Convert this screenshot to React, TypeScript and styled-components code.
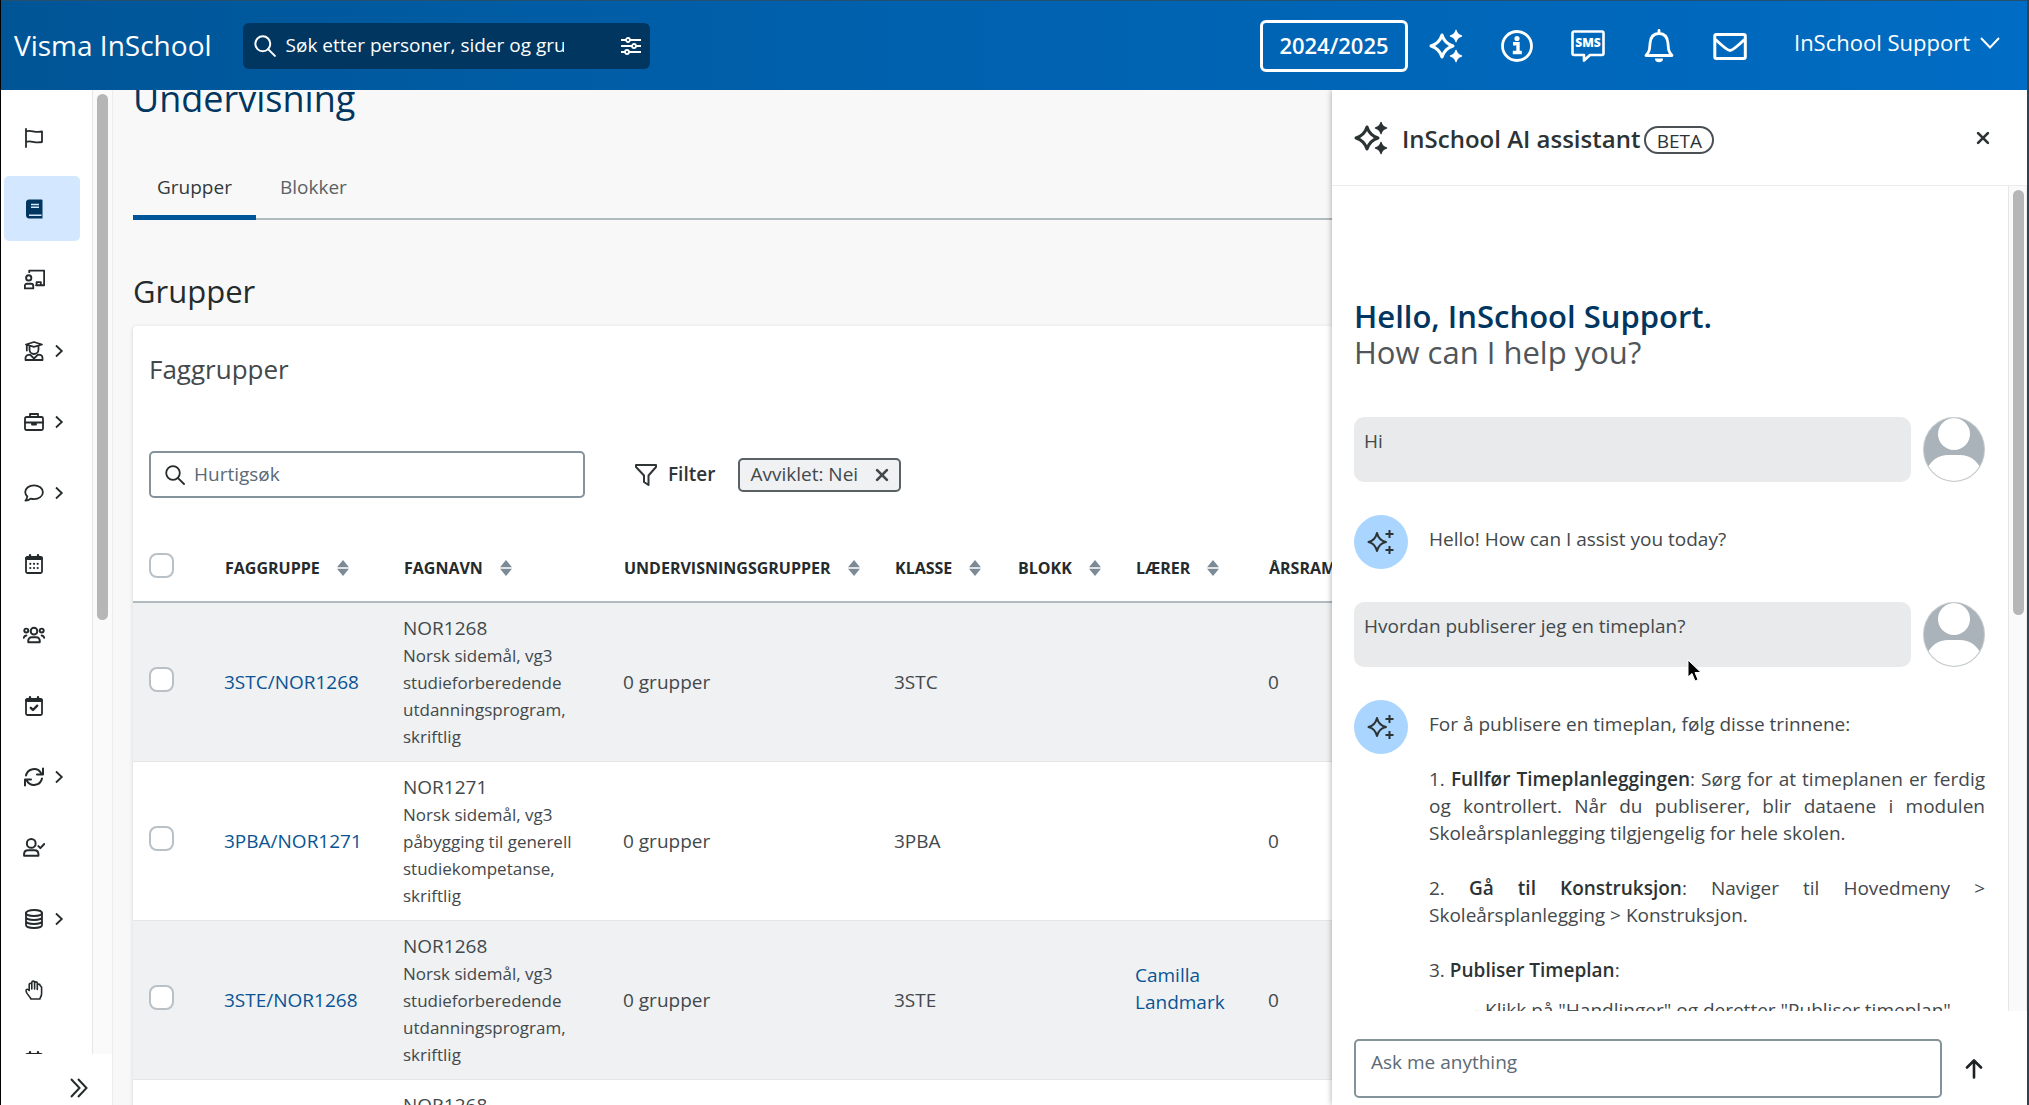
import React from "react";
import styled, { createGlobalStyle, css } from "styled-components";

const font = `"Open Sans", "Noto Sans", "Liberation Sans", sans-serif`;

const color = {
  navy: "#003660",
  blue: "#00559a",
  link: "#0a5494",
  ink: "#252a2c",
  text: "#43484b",
  muted: "#5b6a76",
  border: "#84929b",
  line: "#b0babf",
  hair: "#e4e6e8",
  page: "#f8f8f8",
  stripe: "#eff1f3",
};

const Global = createGlobalStyle`
  *, *::before, *::after { box-sizing: border-box; }
  body { margin: 0; background: #fff; color: ${color.text}; font: 400 19px/27px ${font}; }
  button, input, textarea { font: inherit; color: inherit; }
  button { background: none; border: 0; padding: 0; cursor: pointer; }
  svg { display: block; flex: none; }
  h1, h2, h3, p { margin: 0; font-weight: 400; }
  a { color: ${color.link}; text-decoration: none; }
`;

/* ---------- page frame ---------- */

const Shell = styled.div`
  display: flex;
  flex-direction: column;
  height: 100vh;
  overflow: hidden;
  border-left: 1px solid #000;
  border-right: 2px solid #2b4357;
`;

const Body = styled.div`
  flex: 1;
  min-height: 0;
  display: flex;
`;

/* ---------- top bar ---------- */

const TopBar = styled.header`
  display: flex;
  align-items: center;
  height: 90px;
  padding: 0 27px 0 13px;
  border-top: 1px solid #24506f;
  background: linear-gradient(90deg, #005596 0%, #0061ae 45%, #006cc3 100%);
  color: #fff;
`;

const Brand = styled.div`
  padding-bottom: 2px;
  font-size: 28px;
  line-height: 36px;
  white-space: nowrap;
`;

const GlobalSearch = styled.label`
  display: flex;
  align-items: center;
  width: 407px;
  height: 46px;
  margin-left: 31px;
  padding: 0 9px 0 11px;
  border-radius: 6px;
  background: ${color.navy};
`;

const GlobalSearchInput = styled.input`
  width: 278px;
  margin-left: 10px;
  margin-right: auto;
  padding: 0;
  border: 0;
  outline: 0;
  background: transparent;
  &::placeholder { color: #fff; opacity: 1; }
`;

const TopActions = styled.div`
  display: flex;
  align-items: center;
  margin-left: auto;
`;

const YearButton = styled.button`
  width: 148px;
  height: 52px;
  margin-right: 3px;
  border: 3px solid #fff;
  border-radius: 6px;
  font-size: 22px;
  font-weight: 600;
`;

const TopIconButton = styled.button`
  display: grid;
  place-items: center;
  width: 71px;
  height: 52px;
`;

const AccountButton = styled.button`
  display: flex;
  align-items: center;
  gap: 10px;
  margin-left: 28px;
  padding-bottom: 6px;
  font-size: 22px;
  white-space: nowrap;
`;

/* ---------- scroll bars ---------- */

const Track = styled.div<{ $width: number }>`
  flex: none;
  width: ${(p) => p.$width}px;
  padding: 4px 3px 4px 4px;
  border-left: 1px solid #e6e6e6;
  border-right: 1px solid #ececec;
  background: #fafafa;
`;

const Thumb = styled.div<{ $share: number }>`
  height: ${(p) => p.$share}%;
  width: 11px;
  border-radius: 6px;
  background: #b6b6b6;
`;

/* ---------- side menu ---------- */

const Side = styled.aside`
  flex: none;
  display: flex;
  flex-direction: column;
  width: 112px;
  background: #fff;
`;

const SideScroll = styled.div`
  flex: 1;
  min-height: 0;
  display: flex;
  overflow: hidden;
`;

const Menu = styled.nav`
  flex: 1;
  display: flex;
  flex-direction: column;
  gap: 6px;
  padding: 15px 12px 0 3px;
`;

const MenuItem = styled.button<{ $active?: boolean }>`
  flex: none;
  display: flex;
  align-items: center;
  gap: 7px;
  height: 65px;
  padding-left: 18px;
  border-radius: 5px;
  color: ${(p) => (p.$active ? color.navy : color.ink)};
  background: ${(p) => (p.$active ? "#d3e8ff" : "transparent")};
`;

const MenuIcon = styled.span`
  display: grid;
  place-items: center;
  width: 24px;
`;

const SideFooter = styled.div`
  flex: none;
  display: flex;
  justify-content: flex-end;
  align-items: center;
  height: 51px;
  padding: 16px 24px 0 0;
  border-right: 1px solid #ececec;
  color: ${color.ink};
`;

/* ---------- main ---------- */

const Main = styled.main`
  flex: 1;
  min-width: 0;
  overflow: hidden;
  padding-left: 20px;
  background: ${color.page};
`;

const PageTitle = styled.h1`
  margin-top: -15px;
  font-size: 36px;
  line-height: 48px;
  color: ${color.navy};
`;

const Tabs = styled.div`
  display: flex;
  margin-top: 31px;
  box-shadow: inset 0 -2px 0 ${color.line};
`;

const Tab = styled.button<{ $active?: boolean }>`
  height: 66px;
  padding: 0 24px;
  color: ${(p) => (p.$active ? "#33383b" : "#5c6165")};
  ${(p) => p.$active && css`box-shadow: inset 0 -5px 0 ${color.blue};`}
`;

const SectionTitle = styled.h2`
  margin: 51px 0 15px;
  font-size: 31px;
  line-height: 40px;
  color: ${color.ink};
`;

const Card = styled.section`
  overflow: hidden;
  padding-top: 26px;
  border-radius: 4px 0 0 0;
  background: #fff;
  box-shadow: 0 1px 4px rgba(0, 0, 0, 0.15);
`;

const CardTitle = styled.h3`
  padding-left: 16px;
  font-size: 26px;
  line-height: 34px;
`;

const Toolbar = styled.div`
  display: flex;
  align-items: center;
  margin: 65px 0 32px;
  padding-left: 16px;
`;

const QuickSearch = styled.label`
  display: flex;
  align-items: center;
  gap: 9px;
  width: 436px;
  height: 47px;
  padding: 0 14px;
  border: 2px solid ${color.border};
  border-radius: 5px;
  background: #fff;
  color: ${color.ink};
`;

const QuickSearchInput = styled.input`
  flex: 1;
  min-width: 0;
  padding: 0;
  border: 0;
  outline: 0;
  &::placeholder { color: ${color.muted}; opacity: 1; }
`;

const FilterButton = styled.button`
  display: flex;
  align-items: center;
  gap: 10px;
  margin-left: 49px;
  font-weight: 600;
  color: #303538;
`;

const Chip = styled.div`
  display: flex;
  align-items: center;
  gap: 17px;
  height: 34px;
  margin-left: 23px;
  padding: 0 10px;
  border: 2px solid #5a6165;
  border-radius: 5px;
  background: ${color.stripe};
  white-space: nowrap;
`;

const Table = styled.table`
  width: 1334px;
  table-layout: fixed;
  border-collapse: separate;
  border-spacing: 0;
  text-align: left;
`;

const Column = styled.col<{ $width: number }>`
  width: ${(p) => p.$width}px;
`;

const HeadCell = styled.th`
  height: 73px;
  padding: 5px 0 0 2px;
  border-bottom: 2px solid ${color.line};
  font-size: 16px;
  font-weight: 700;
  color: ${color.ink};
  white-space: nowrap;
`;

const HeadCheck = styled(HeadCell)`
  padding: 0 0 0 16px;
`;

const SortButton = styled.button`
  display: flex;
  align-items: center;
  gap: 17px;
`;

const Row = styled.tr`
  &:nth-child(odd) { background: ${color.stripe}; }
`;

const Cell = styled.td`
  padding: 11px 0 11px 1px;
  border-bottom: 1px solid ${color.hair};
`;

const CheckCell = styled(Cell)`
  padding: 0 0 6px 16px;
`;

const TeacherCell = styled(Cell)`
  padding-bottom: 33px;
`;

const Subject = styled.div`
  width: 180px;
  font-size: 17px;
`;

const SubjectCode = styled.div`
  font-size: 19px;
  line-height: 28px;
`;

const Checkbox = styled.input`
  appearance: none;
  display: block;
  width: 25px;
  height: 25px;
  margin: 0;
  border: 2px solid #b9c1c6;
  border-radius: 8px;
  background: #fff;
`;

/* ---------- assistant panel ---------- */

const Panel = styled.aside`
  position: relative;
  flex: none;
  display: flex;
  flex-direction: column;
  width: 695px;
  background: #fff;
  box-shadow: 0 0 6px rgba(0, 0, 0, 0.35);
  clip-path: inset(0 0 0 -12px);
`;

const PanelHeader = styled.div`
  flex: none;
  display: flex;
  align-items: center;
  height: 96px;
  padding: 0 37px 0 22px;
  border-bottom: 1px solid #ebebeb;
  color: #2c3335;
`;

const PanelTitle = styled.h2`
  margin-left: 14px;
  padding-top: 2px;
  font-size: 24px;
  line-height: 32px;
  font-weight: 600;
`;

const Beta = styled.span`
  display: grid;
  place-items: center;
  width: 70px;
  height: 28px;
  margin: 4px 0 0 4px;
  border: 2px solid #4a5053;
  border-radius: 14px;
`;

const CloseButton = styled.button`
  margin-left: auto;
`;

const PanelScroll = styled.div`
  flex: 1;
  min-height: 0;
  display: flex;
  overflow: hidden;
`;

const Conversation = styled.div`
  flex: 1;
  min-width: 0;
  padding: 112px 23px 0 22px;
`;

const Greeting = styled.div`
  font-size: 31px;
  line-height: 36px;
  color: #4f5558;
  margin-bottom: 47px;
`;

const GreetingName = styled.p`
  font-weight: 600;
  color: ${color.navy};
`;

const Messages = styled.div`
  display: flex;
  flex-direction: column;
  gap: 33px;
`;

const UserMessage = styled.div`
  display: flex;
  gap: 12px;
`;

const Bubble = styled.p`
  flex: 1;
  min-height: 65px;
  padding: 11px 10px;
  border-radius: 10px;
  background: #e8eaec;
`;

const BotMessage = styled.div`
  display: flex;
  gap: 21px;
`;

const BotBadge = styled.div`
  flex: none;
  display: grid;
  place-items: center;
  width: 54px;
  height: 54px;
  border-radius: 50%;
  background: #a9d5ff;
  color: #2c3335;
`;

const BotText = styled.div`
  flex: 1;
  display: flex;
  flex-direction: column;
  gap: 28px;
  padding-top: 11px;
  text-align: justify;
  b { font-weight: 600; color: #2c3335; }
`;

const SubStep = styled.p`
  margin-top: -15px;
  padding-left: 45px;
`;

const Composer = styled.form`
  flex: none;
  display: flex;
  padding: 28px 43px 7px 22px;
`;

const ComposerInput = styled.textarea`
  flex: 1;
  height: 59px;
  padding: 8px 15px;
  border: 2px solid ${color.border};
  border-radius: 5px;
  outline: 0;
  resize: none;
  overflow: hidden;
  &::placeholder { color: ${color.muted}; opacity: 1; }
`;

const SendButton = styled.button`
  margin-left: 22px;
  color: #1d2224;
`;

const Pointer = styled.svg`
  position: absolute;
  left: 355px;
  top: 569px;
`;

/* ---------- icons ---------- */

type IconProps = { size?: number; w?: number; children: React.ReactNode };

const Icon = ({ size = 20, w = 1.8, children }: IconProps) => (
  <svg width={size} height={size} viewBox="0 0 20 20" fill="none" stroke="currentColor" strokeWidth={w} strokeLinecap="round" strokeLinejoin="round" aria-hidden="true">
    {children}
  </svg>
);

const SearchIcon = ({ size = 22 }: { size?: number }) => (
  <Icon size={size} w={1.8}><circle cx="8" cy="8" r="6.8" /><path d="M12.800 12.800 19 19" /></Icon>
);

const CrossIcon = ({ size = 14 }: { size?: number }) => (
  <Icon size={size} w={3.8}><path d="M3 3l14 14M17 3 3 17" /></Icon>
);

const Sparkles = ({ size = 34 }: { size?: number }) => (
  <svg width={size} height={size} viewBox="0 0 34 34" fill="none" stroke="currentColor" strokeLinejoin="round" aria-hidden="true">
    <path strokeWidth="3" d="M13 6 Q15.600 14.400 24 17 Q15.600 19.600 13 28 Q10.400 19.600 2 17 Q10.400 14.400 13 6Z" />
    <path fill="currentColor" strokeWidth="1.400" d="M27 1.500 Q28 6 32.500 7 Q28 8 27 12.500 Q26 8 21.500 7 Q26 6 27 1.500Z M27 21.500 Q28 26 32.500 27 Q28 28 27 32.500 Q26 28 21.500 27 Q26 26 27 21.500Z" />
  </svg>
);

const BotIcon = () => (
  <svg width="28" height="28" viewBox="0 0 28 28" fill="none" stroke="currentColor" strokeWidth="2" strokeLinejoin="round" aria-hidden="true">
    <path d="M10 5 Q11.700 12.300 19 14 Q11.700 15.700 10 23 Q8.300 15.700 1.500 14 Q8.300 12.300 10 5Z" />
    <path d="M22.500 2v8M18.500 6h8M22.500 18v8M18.500 22h8" />
  </svg>
);

const Chevron = () => (
  <svg width="12" height="14" viewBox="0 0 12 14" fill="none" stroke="currentColor" strokeWidth="1.800" aria-hidden="true">
    <path d="M3 1.500 8.800 7 3 12.500" />
  </svg>
);

const SortIcon = () => (
  <svg width="12" height="16" viewBox="0 0 12 16" fill="#7b8a95" aria-hidden="true">
    <path d="M6 0 12 7.200H0ZM6 16 0 8.800h12Z" />
  </svg>
);

const Avatar = () => (
  <svg width="62" height="65" viewBox="0 0 62 65" role="img" aria-label="InSchool Support">
    <clipPath id="face"><ellipse cx="31" cy="32.500" rx="30" ry="31.500" /></clipPath>
    <ellipse cx="31" cy="32.500" rx="31" ry="32.500" fill="#c4cacd" />
    <g clipPath="url(#face)">
      <rect width="62" height="65" fill="#a9b3b9" />
      <ellipse cx="31" cy="17" rx="16" ry="16" fill="#fff" />
      <path d="M4 52 Q11 38 25 38H37Q51 38 58 52V65H4Z" fill="#fff" />
    </g>
  </svg>
);

const FlagIcon = () => <Icon><path d="M2 1v18M2 3.500c5-2.400 8 1.800 16 0v10.500c-8 1.800-11-2.400-16 0" /></Icon>;
const BookIcon = () => (
  <svg width="20" height="20" viewBox="0 0 20 20" aria-hidden="true">
    <path fill="currentColor" d="M5 .5h12.500a1 1 0 0 1 1 1V19.500H5A3.300 3.300 0 0 1 2 16.300V3.700A3.200 3.200 0 0 1 5 .5Z" />
    <path stroke="#d3e8ff" strokeWidth="1.400" d="M7 5.500h8M7 8.300h8M5 16.300h12.500" />
  </svg>
);
const TeacherIcon = () => (
  <Icon size={21}><circle cx="4.500" cy="8.500" r="2.500" /><path d="M.8 18.500v-2.500a2 2 0 0 1 2-2h4a2 2 0 0 1 2 2v2.500ZM5 3V1.500h14.200v14H11.500M12 15.500v-3h4v3" /></Icon>
);
const StudentIcon = () => (
  <Icon><path d="M2 3.500 10 1l8 2.500-8 2.300ZM2.800 4v5.500M5.500 5v3.500a4.500 4.500 0 0 0 9 0V5M1.500 19v-2c0-2 2-3.300 4.500-3.300L10 17.500l4-3.800c2.500 0 4.500 1.300 4.500 3.300v2Z" /></Icon>
);
const CaseIcon = () => (
  <Icon><rect x="1" y="5" width="18" height="13" rx="1.500" /><path d="M6 5V2h8v3M1 10.500h18M8 10.500v2h4v-2" /></Icon>
);
const ChatIcon = () => (
  <Icon><path d="M3.300 13.500A6.500 6.500 0 0 1 1.200 9.200C1.200 5.300 5.200 2.300 10 2.300s8.900 3 8.900 6.900-4 6.900-8.900 6.900c-1.200 0-2.400-.2-3.400-.5-1.300 1.300-3 2-5.200 2 .9-1 1.700-2.300 1.900-4.100Z" /></Icon>
);
const CalendarIcon = () => (
  <Icon><rect x="2" y="3" width="16" height="16" rx="1.500" /><path strokeWidth="3.400" d="M2.800 4.300h14.400" /><path strokeWidth="2.400" d="M6 1.200v2M14 1.200v2" /><path strokeWidth="2.200" d="M6.300 9.800h.01M10 9.800h.01M13.700 9.800h.01M6.300 14h.01M10 14h.01M13.700 14h.01" /></Icon>
);
const UsersIcon = () => (
  <Icon size={22}><circle cx="10" cy="6.500" r="3" /><circle cx="3" cy="6" r="1.800" /><circle cx="17" cy="6" r="1.800" /><path d="M4.800 16.500V15a3 3 0 0 1 3-3h4.400a3 3 0 0 1 3 3v1.500ZM.7 12.500a3 3 0 0 1 2.300-2M19.300 12.500a3 3 0 0 0-2.300-2" /></Icon>
);
const CalendarCheckIcon = () => (
  <Icon><rect x="2" y="3" width="16" height="16" rx="1.500" /><path strokeWidth="3.400" d="M2.800 4.300h14.400" /><path strokeWidth="2.400" d="M6 1.200v2M14 1.200v2M6.800 11.800l2.200 2.200 4.200-4.300" /></Icon>
);
const SyncIcon = () => (
  <Icon w={2}><path d="M2 8.500A8.200 8.200 0 0 1 17 6M19 1.500V7.500H13M18 11.500A8.200 8.200 0 0 1 3 14M1 18.500V12.500H7" /></Icon>
);
const UserCheckIcon = () => (
  <Icon size={22}><circle cx="7.500" cy="5.800" r="4" /><path d="M1 17v-1.800A3.500 3.500 0 0 1 4.500 12h6a3.500 3.500 0 0 1 3.500 3.200V17ZM14 8.300l1.800 1.800 3.500-3.700" /></Icon>
);
const DatabaseIcon = () => (
  <Icon><ellipse cx="10" cy="4" rx="8" ry="3" /><path d="M2 4v12c0 1.700 3.600 3 8 3s8-1.300 8-3V4M2 8c0 1.700 3.600 3 8 3s8-1.300 8-3M2 12c0 1.700 3.600 3 8 3s8-1.300 8-3" /></Icon>
);
const HandIcon = () => (
  <Icon w={1.6}><path d="M5.200 10.500V4.500a1.300 1.300 0 0 1 2.600 0V9V2.500a1.400 1.400 0 0 1 2.800 0V9V3.200a1.300 1.300 0 0 1 2.700 0V9.500V5.500a1.400 1.400 0 0 1 2.800 0l1.500 1.800v6.200c0 3.300-1.600 3.500-1.600 5.500H6.800C6.800 17 2.200 14.500 2 10.800c0-1.800 1.700-2.200 3.200-.3Z" /></Icon>
);

const FunnelIcon = () => (
  <svg width="24" height="24" viewBox="0 0 24 24" fill="none" stroke="currentColor" strokeWidth="2" strokeLinejoin="round" aria-hidden="true">
    <path d="M2 2h20v2L14.500 12.500v9.500L10 19v-6.500L2 4Z" />
  </svg>
);

const SlidersIcon = () => (
  <svg width="20" height="20" viewBox="0 0 20 20" fill={color.navy} stroke="#fff" strokeWidth="1.800" aria-hidden="true">
    <path d="M0 4h20M0 10h20M0 16h20" />
    <circle cx="7" cy="4" r="2" /><circle cx="13" cy="10" r="2" /><circle cx="6" cy="16" r="2" />
  </svg>
);

const InfoIcon = () => (
  <svg width="34" height="34" viewBox="0 0 34 34" fill="none" stroke="#fff" strokeWidth="2.800" aria-hidden="true">
    <circle cx="17" cy="17" r="14.500" />
    <path d="M13 14.800h5v8.500M12.800 23.500h9" strokeWidth="3.400" />
    <circle cx="17" cy="9.500" r="2.600" fill="#fff" stroke="none" />
  </svg>
);

const SmsLetters = styled.text`
  font: 800 12px ${font};
  fill: #fff;
  text-anchor: middle;
`;

const SmsIcon = () => (
  <svg width="34" height="34" viewBox="0 0 34 34" aria-hidden="true">
    <path fill="none" stroke="#fff" strokeWidth="2.600" strokeLinejoin="round" d="M3 2.500h28a1.500 1.500 0 0 1 1.500 1.500v20.500a1.500 1.500 0 0 1-1.500 1.500H19l-6 5.500V26H3A1.500 1.500 0 0 1 1.500 24.500V4A1.500 1.500 0 0 1 3 2.500Z" />
    <SmsLetters x="17" y="18">SMS</SmsLetters>
  </svg>
);

const BellIcon = () => (
  <svg width="34" height="34" viewBox="0 0 34 34" fill="none" stroke="#fff" strokeWidth="2.800" strokeLinejoin="round" aria-hidden="true">
    <path d="M4 26.500C8 22 7.500 20 8 14.500 8.500 8 12 4.500 17 4.500S25.500 8 26 14.500C26.500 20 26 22 30 26.500Z" />
    <path d="M17 1.500v3" strokeLinecap="round" />
    <path d="M13 29.500h8a4 3.800 0 0 1-8 0Z" fill="#fff" stroke="none" />
  </svg>
);

const MailIcon = () => (
  <svg width="34" height="34" viewBox="0 0 34 34" fill="none" stroke="#fff" strokeWidth="3" strokeLinejoin="round" aria-hidden="true">
    <rect x="1.800" y="5.500" width="30.500" height="24" rx="1.500" />
    <path d="M2.500 10.500 Q14 21.500 17 21.500T31.500 10.500" />
  </svg>
);

/* ---------- data ---------- */

const menu: { label: string; icon: React.ReactNode; more?: boolean; active?: boolean }[] = [
  { label: "Start", icon: <FlagIcon /> },
  { label: "Undervisning", icon: <BookIcon />, active: true },
  { label: "Klasser", icon: <TeacherIcon /> },
  { label: "Elever", icon: <StudentIcon />, more: true },
  { label: "Ansatte", icon: <CaseIcon />, more: true },
  { label: "Meldinger", icon: <ChatIcon />, more: true },
  { label: "Kalender", icon: <CalendarIcon /> },
  { label: "Kontakter", icon: <UsersIcon /> },
  { label: "Prøver", icon: <CalendarCheckIcon /> },
  { label: "Synkronisering", icon: <SyncIcon />, more: true },
  { label: "Tilstede", icon: <UserCheckIcon /> },
  { label: "Data", icon: <DatabaseIcon />, more: true },
  { label: "Fravær", icon: <HandIcon /> },
  { label: "Planer", icon: <CalendarIcon /> },
];

const columnWidths = [90, 179, 220, 271, 123, 118, 133, 200];
const headings = ["FAGGRUPPE", "FAGNAVN", "UNDERVISNINGSGRUPPER", "KLASSE", "BLOKK", "LÆRER", "ÅRSRAMME"];

const groups = [
  { group: "3STC/NOR1268", code: "NOR1268", name: "Norsk sidemål, vg3 studieforberedende utdanningsprogram, skriftlig", klass: "3STC", teacher: "" },
  { group: "3PBA/NOR1271", code: "NOR1271", name: "Norsk sidemål, vg3 påbygging til generell studiekompetanse, skriftlig", klass: "3PBA", teacher: "" },
  { group: "3STE/NOR1268", code: "NOR1268", name: "Norsk sidemål, vg3 studieforberedende utdanningsprogram, skriftlig", klass: "3STE", teacher: "Camilla Landmark" },
  { group: "3STD/NOR1268", code: "NOR1268", name: "Norsk sidemål, vg3 studieforberedende utdanningsprogram, skriftlig", klass: "3STD", teacher: "" },
];

/* ---------- views ---------- */

const Header = () => (
  <TopBar>
    <Brand>Visma InSchool</Brand>
    <GlobalSearch>
      <SearchIcon />
      <GlobalSearchInput aria-label="Søk" placeholder="Søk etter personer, sider og grupper" />
      <SlidersIcon />
    </GlobalSearch>
    <TopActions>
      <YearButton>2024/2025</YearButton>
      <TopIconButton aria-label="AI assistant"><Sparkles /></TopIconButton>
      <TopIconButton aria-label="Info"><InfoIcon /></TopIconButton>
      <TopIconButton aria-label="Tekstmelding"><SmsIcon /></TopIconButton>
      <TopIconButton aria-label="Varsler"><BellIcon /></TopIconButton>
      <TopIconButton aria-label="Meldinger"><MailIcon /></TopIconButton>
      <AccountButton>
        InSchool Support
        <svg width="20" height="12" viewBox="0 0 20 12" fill="none" stroke="#fff" strokeWidth="2" aria-hidden="true"><path d="M1 1l9 9.500L19 1" /></svg>
      </AccountButton>
    </TopActions>
  </TopBar>
);

const SideMenu = () => (
  <Side>
    <SideScroll>
      <Menu aria-label="Hovedmeny">
        {menu.map((m) => (
          <MenuItem key={m.label} $active={m.active} aria-label={m.label}>
            <MenuIcon>{m.icon}</MenuIcon>
            {m.more && <Chevron />}
          </MenuItem>
        ))}
      </Menu>
      <Track $width={21}><Thumb $share={55} /></Track>
    </SideScroll>
    <SideFooter>
      <button aria-label="Utvid meny">
        <svg width="18" height="20" viewBox="0 0 18 20" fill="none" stroke="currentColor" strokeWidth="2" aria-hidden="true"><path d="M1 1l8.500 9L1 19M8 1l8.500 9L8 19" /></svg>
      </button>
    </SideFooter>
  </Side>
);

const GroupTable = () => (
  <Table>
    <colgroup>{columnWidths.map((w, i) => <Column key={i} $width={w} />)}</colgroup>
    <thead>
      <tr>
        <HeadCheck><Checkbox type="checkbox" aria-label="Velg alle" /></HeadCheck>
        {headings.map((h) => (
          <HeadCell key={h}><SortButton>{h}<SortIcon /></SortButton></HeadCell>
        ))}
      </tr>
    </thead>
    <tbody>
      {groups.map((g) => (
        <Row key={g.group}>
          <CheckCell><Checkbox type="checkbox" aria-label={g.group} /></CheckCell>
          <Cell><a href="#gruppe">{g.group}</a></Cell>
          <Cell><SubjectCode>{g.code}</SubjectCode><Subject>{g.name}</Subject></Cell>
          <Cell>0 grupper</Cell>
          <Cell>{g.klass}</Cell>
          <Cell />
          <TeacherCell>{g.teacher && <a href="#laerer">{g.teacher}</a>}</TeacherCell>
          <Cell>0</Cell>
        </Row>
      ))}
    </tbody>
  </Table>
);

const Assistant = () => (
  <Panel>
    <PanelHeader>
      <Sparkles />
      <PanelTitle>InSchool AI assistant</PanelTitle>
      <Beta>BETA</Beta>
      <CloseButton aria-label="Lukk"><CrossIcon size={14} /></CloseButton>
    </PanelHeader>
    <PanelScroll>
      <Conversation>
        <Greeting>
          <GreetingName>Hello, InSchool Support.</GreetingName>
          <p>How can I help you?</p>
        </Greeting>
        <Messages>
          <UserMessage><Bubble>Hi</Bubble><Avatar /></UserMessage>
          <BotMessage>
            <BotBadge><BotIcon /></BotBadge>
            <BotText><p>Hello! How can I assist you today?</p></BotText>
          </BotMessage>
          <UserMessage><Bubble>Hvordan publiserer jeg en timeplan?</Bubble><Avatar /></UserMessage>
          <BotMessage>
            <BotBadge><BotIcon /></BotBadge>
            <BotText>
              <p>For å publisere en timeplan, følg disse trinnene:</p>
              <p>1. <b>Fullfør Timeplanleggingen</b>: Sørg for at timeplanen er ferdig og kontrollert. Når du publiserer, blir dataene i modulen Skoleårsplanlegging tilgjengelig for hele skolen.</p>
              <p>2. <b>Gå til Konstruksjon</b>: Naviger til Hovedmeny &gt; Skoleårsplanlegging &gt; Konstruksjon.</p>
              <p>3. <b>Publiser Timeplan</b>:</p>
              <SubStep>- Klikk på "Handlinger" og deretter "Publiser timeplan"</SubStep>
            </BotText>
          </BotMessage>
        </Messages>
      </Conversation>
      <Track $width={19}><Thumb $share={52} /></Track>
    </PanelScroll>
    <Composer>
      <ComposerInput aria-label="Ask me anything" placeholder="Ask me anything" />
      <SendButton type="button" aria-label="Send">
        <svg width="20" height="20" viewBox="0 0 20 20" fill="none" stroke="currentColor" strokeWidth="2.600" strokeLinecap="round" strokeLinejoin="round" aria-hidden="true"><path d="M10 18.500V1.500M3 8.500 10 1.500 17 8.500" /></svg>
      </SendButton>
    </Composer>
    <Pointer width="16" height="24" viewBox="0 0 16 24" aria-hidden="true">
      <path d="M1 1v17l4-3.500 3 7.500 3-1.300L8 13.500h6Z" fill="#000" stroke="#fff" strokeWidth="1" />
    </Pointer>
  </Panel>
);

export default function App() {
  return (
    <Shell>
      <Global />
      <Header />
      <Body>
        <SideMenu />
        <Main>
          <PageTitle>Undervisning</PageTitle>
          <Tabs role="tablist">
            <Tab role="tab" aria-selected="true" $active>Grupper</Tab>
            <Tab role="tab" aria-selected="false">Blokker</Tab>
          </Tabs>
          <SectionTitle>Grupper</SectionTitle>
          <Card>
            <CardTitle>Faggrupper</CardTitle>
            <Toolbar>
              <QuickSearch>
                <SearchIcon size={20} />
                <QuickSearchInput aria-label="Hurtigsøk" placeholder="Hurtigsøk" />
              </QuickSearch>
              <FilterButton><FunnelIcon />Filter</FilterButton>
              <Chip>
                Avviklet: Nei
                <button aria-label="Fjern filter"><CrossIcon size={14} /></button>
              </Chip>
            </Toolbar>
            <GroupTable />
          </Card>
        </Main>
        <Assistant />
      </Body>
    </Shell>
  );
}
